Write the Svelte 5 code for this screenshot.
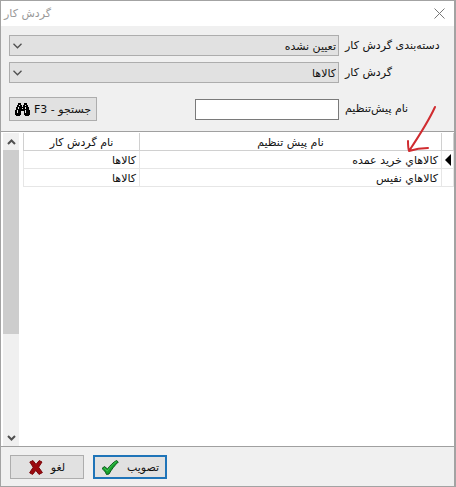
<script>
    let categories = ['تعیین نشده'];
    let workflows = ['کالاها'];

    let category = categories[0];
    let workflow = workflows[0];
    let presetName = '';
    let selected = 0;

    let presets = [
        { name: 'کالاهاي خرید عمده', workflow: 'کالاها' },
        { name: 'کالاهاي نفیس', workflow: 'کالاها' }
    ];
</script>

<div class="window" dir="rtl">
    <header class="titlebar">
        <button class="close" type="button" aria-label="بستن">
            <svg width="11" height="11" viewBox="0 0 11 11">
                <path d="M0.5 0.5 L10.5 10.5 M10.5 0.5 L0.5 10.5" fill="none" stroke="#777" />
            </svg>
        </button>
        <h1>گردش کار</h1>
    </header>

    <form class="filters" on:submit|preventDefault>
        <label for="category">دسته‌بندی گردش کار</label>
        <div class="combo">
            <select id="category" bind:value={category}>
                {#each categories as item}
                    <option value={item}>{item}</option>
                {/each}
            </select>
            <svg class="chevron" width="9" height="6" viewBox="0 0 9 6">
                <path d="M0.5 0.8 L4.5 4.8 L8.5 0.8" fill="none" stroke="#505050" stroke-width="1.3" />
            </svg>
        </div>

        <label for="workflow">گردش کار</label>
        <div class="combo">
            <select id="workflow" bind:value={workflow}>
                {#each workflows as item}
                    <option value={item}>{item}</option>
                {/each}
            </select>
            <svg class="chevron" width="9" height="6" viewBox="0 0 9 6">
                <path d="M0.5 0.8 L4.5 4.8 L8.5 0.8" fill="none" stroke="#505050" stroke-width="1.3" />
            </svg>
        </div>

        <label class="search-label" for="preset">نام پیش‌تنظیم</label>
        <div class="search">
            <input id="preset" type="text" bind:value={presetName} />
            <button class="btn find" type="submit">
                <span>جستجو - F3</span>
                <svg width="15" height="13" viewBox="0 0 15 13" shape-rendering="crispEdges">
                    <path d="M3 0h3v2h1v2h1V2h1V0h3v2h1v2h1v3h1v5h-1v1h-4v-1h-1V8H6v4H5v1H1v-1H0V7h1V4h1V2h1z" fill="#000" />
                    <path d="M4 2h1v1H4zM10 2h1v1h-1zM3 4h1v2H3zM10 4h1v2h-1zM2 7h1v3H2zM10 7h1v3h-1zM7 5h1v1H7z" fill="#e8e8e8" />
                </svg>
            </button>
        </div>
    </form>

    <main class="list">
        <table>
            <colgroup>
                <col class="col-mark" />
                <col />
                <col class="col-flow" />
            </colgroup>
            <thead>
                <tr>
                    <th></th>
                    <th>نام پیش تنظیم</th>
                    <th>نام گردش کار</th>
                </tr>
            </thead>
            <tbody>
                {#each presets as preset, i}
                    <tr on:click={() => (selected = i)}>
                        <td class="mark">
                            {#if i === selected}
                                <svg width="6" height="12" viewBox="0 0 6 12"><path d="M6 0v12L0 6z" /></svg>
                            {/if}
                        </td>
                        <td>{preset.name}</td>
                        <td>{preset.workflow}</td>
                    </tr>
                {/each}
            </tbody>
        </table>

        <div class="scrollbar">
            <button type="button" aria-label="بالا">
                <svg width="9" height="6" viewBox="0 0 9 6">
                    <path d="M1 5 L4.5 1.5 L8 5" fill="none" stroke="#505050" stroke-width="2" />
                </svg>
            </button>
            <div class="track"><div class="thumb"></div></div>
            <button type="button" aria-label="پایین">
                <svg width="9" height="6" viewBox="0 0 9 6">
                    <path d="M1 1 L4.5 4.5 L8 1" fill="none" stroke="#505050" stroke-width="2" />
                </svg>
            </button>
        </div>

        <!-- hand-drawn pointer to the first preset -->
        <svg class="pointer" width="32" height="50" viewBox="0 0 32 50">
            <path d="M29 2 C24 13 17 25 3 46 M2 36 C2 40 2 43 3 46 C9 44 15 43 22 43" fill="none" stroke="#d02c30" stroke-width="2" stroke-linecap="round" stroke-linejoin="round" />
        </svg>
    </main>

    <footer class="actions">
        <button class="btn primary" type="button">
            <span>تصویب</span>
            <svg width="18" height="15" viewBox="0 0 18 15">
                <path d="M1 8.5 L3.5 6.5 L6.5 9 C9 5.5 12 2.5 15.5 0.5 L17.3 2 C13.5 5.5 10.5 9.5 8 14 L5.5 14.5 C4.5 12 3 10 1 8.5z" fill="#17a02c" stroke="#0b5a1a" />
                <path d="M3.2 8 L6.3 11 C9 7 12 3.8 15.3 1.7" fill="none" stroke="#3fc753" />
            </svg>
        </button>
        <button class="btn" type="button">
            <span>لغو</span>
            <svg width="14" height="15" viewBox="0 0 14 15">
                <path d="M0.8 2 L4 0.6 L7 4.4 L10.2 0.6 L13 2 L9.6 7.2 L13.4 12.6 L10 14.4 L6.8 10.4 L3.6 14.4 L0.6 12.8 L4.2 7.3z" fill="#9c0a10" stroke="#7a060a" />
            </svg>
        </button>
    </footer>
</div>

<style>
    :global(body) {
        background: #f0f0f0;
    }

    .window {
        display: flex;
        flex-direction: column;
        box-sizing: border-box;
        min-height: 100vh;
        border: 1px solid #a3a3a3;
        border-right-width: 2px;
        background: #f0f0f0;
        color: #111;
        font-family: "DejaVu Sans", Tahoma, sans-serif;
        font-size: 11px;
        line-height: 16px;
    }

    button,
    input,
    select {
        box-sizing: border-box;
        margin: 0;
        font: inherit;
        color: inherit;
    }

    svg {
        display: block;
        flex: none;
    }

    .titlebar {
        display: flex;
        align-items: center;
        justify-content: space-between;
        height: 25px;
        padding: 0 9px 0 3px;
        background: #fff;
    }

    h1 {
        margin: 0;
        font-size: 11px;
        font-weight: normal;
        color: #999;
    }

    .close {
        padding: 0;
        border: 0;
        background: none;
    }

    .filters {
        display: grid;
        grid-template-columns: 96px 1fr;
        column-gap: 6px;
        row-gap: 6px;
        align-items: center;
        padding: 9px 13px 10px 8px;
    }

    label {
        text-align: left;
        white-space: nowrap;
    }

    .combo {
        display: grid;
        align-items: center;
    }

    .combo select,
    .chevron {
        grid-area: 1 / 1;
    }

    .combo select {
        width: 100%;
        height: 21px;
        padding: 2px 2px 0;
        border: 1px solid #adadad;
        border-radius: 0;
        appearance: none;
        background: #e1e1e1;
    }

    .chevron {
        justify-self: end;
        margin-left: 4px;
        pointer-events: none;
    }

    .search-label,
    .search {
        margin-top: 8px;
    }

    .search {
        display: flex;
        align-items: center;
        justify-content: space-between;
    }

    .search input {
        width: 144px;
        height: 21px;
        padding: 0 3px;
        border: 1px solid #7a7a7a;
        background: #fff;
    }

    .btn {
        display: flex;
        align-items: center;
        justify-content: center;
        gap: 8px;
        width: 74px;
        height: 24px;
        padding: 0;
        border: 1px solid #adadad;
        background: #e1e1e1;
        white-space: nowrap;
    }

    .btn span {
        padding-top: 2px;
    }

    .find {
        gap: 4px;
        width: 88px;
    }

    .primary {
        border: 2px solid #1f74b8;
    }

    .list {
        position: relative;
        display: flex;
        flex: 1;
        align-items: stretch;
        gap: 4px;
        padding: 1px 0 0 2px;
        border-top: 1px solid #a0a0a0;
        border-bottom: 1px solid #a0a0a0;
        background: #fff;
    }

    table {
        flex: 1;
        align-self: flex-start;
        border-collapse: collapse;
        table-layout: fixed;
    }

    .col-mark {
        width: 12px;
    }

    .col-flow {
        width: 116px;
    }

    th,
    td {
        height: 15px;
        padding: 2px 3px 0;
        border: 1px solid #e6e6e6;
        font-weight: normal;
        line-height: 15px;
        text-align: right;
        white-space: nowrap;
    }

    th {
        border-top: 0;
        border-color: #d0d0d0;
        text-align: center;
    }

    .mark {
        padding: 0 2px;
    }

    .scrollbar {
        display: flex;
        flex-direction: column;
        width: 16px;
        background: #f0f0f0;
    }

    .scrollbar button {
        display: flex;
        align-items: center;
        justify-content: center;
        height: 17px;
        padding: 0;
        border: 0;
        background: none;
    }

    .track {
        flex: 1;
    }

    .thumb {
        height: 66%;
        background: #cdcdcd;
    }

    .pointer {
        position: absolute;
        top: -27px;
        right: 16px;
        pointer-events: none;
    }

    .actions {
        display: flex;
        justify-content: flex-end;
        gap: 9px;
        padding: 8px 9px 7px;
    }
</style>
